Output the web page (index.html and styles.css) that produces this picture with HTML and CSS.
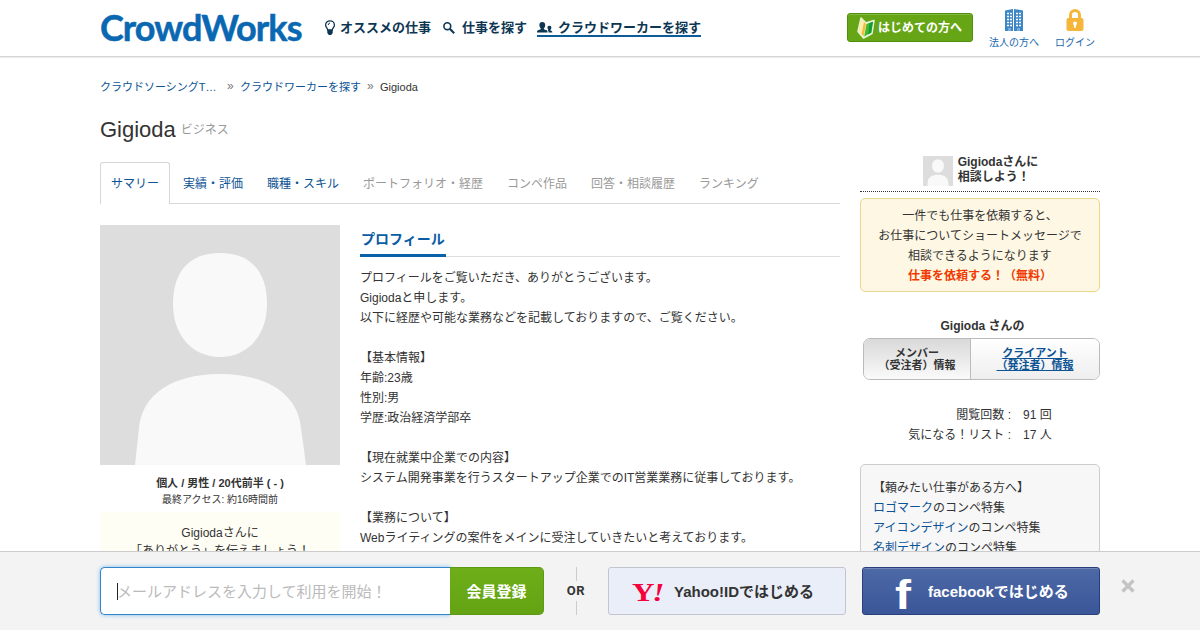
FILE: index.html
```html
<!DOCTYPE html>
<html lang="ja">

<head>
    <meta charset="utf-8">
    <title>Gigioda | CrowdWorks</title>
    <link rel="stylesheet" href="styles.css">
</head>

<body>
    <header class="header">
        <div class="header_inner">
            <a class="logo" href="#">CrowdWorks</a>
            <nav class="global_nav">
                <a class="nav_item" href="#">
                    <svg class="icon_bulb" width="12" height="16" viewBox="0 0 12 16">
                        <path d="M3.7 10C3.7 8 1.6 7.5 1.6 4.9a4.4 4.1 0 0 1 8.8 0C10.4 7.5 8.3 8 8.3 10z" fill="none" stroke="#0d3653" stroke-width="1.3" />
                        <path d="M3.3 10h5.4v3L7.2 15H4.8L3.3 13z" fill="#0d3653" />
                        <path d="M4.2 5q.2-1.8 1.8-2" fill="none" stroke="#0d3653" />
                    </svg>オススメの仕事</a>
                <a class="nav_item" href="#">
                    <svg class="icon_search" width="12" height="12" viewBox="0 0 12 12" fill="none" stroke="#0d3653">
                        <circle cx="4.3" cy="4.2" r="3.4" stroke-width="1.6" />
                        <path d="M6.8 6.8l4.4 4.4" stroke-width="2.1" />
                    </svg>仕事を探す</a>
                <a class="nav_item active" href="#">
                    <svg class="icon_users" width="16" height="11" viewBox="0 0 16 11" fill="#0d3653">
                        <path d="M5.3 0C7.4 0 8.4 1.3 8.2 3.2 8 5 7.4 5.8 6.9 6.3v1l2.6 1c.9.4 1.1 1 1.1 2.2H0c0-1.2.2-1.8 1.1-2.2l2.6-1v-1C3.2 5.8 2.6 5 2.4 3.2 2.2 1.3 3.2 0 5.3 0z" />
                        <path d="M12.4 3.8c1.5 0 2.1.9 1.9 2.2-.1 1-.5 1.5-.9 1.9v.7c1.3.4 2 .7 2 1.9h-3.7c0-1.3-.5-2-1.2-2.3.6-.2.9-.3.9-.5-.4-.4-.8-.8-.9-1.7-.1-1.3.4-2.2 1.9-2.2z" />
                    </svg>クラウドワーカーを探す</a>
            </nav>
            <div class="header_right">
                <a class="beginner_button" href="#">
                    <svg width="18" height="22" viewBox="0 0 18 22">
                        <path d="M4 1l5 5 8-2.5-2 13L6.5 21 1 14.5z" fill="#e9f5da" stroke="#e9f5da" stroke-width="1.5" stroke-linejoin="round" />
                        <path d="M4.3 2L9 7 6.7 19.5 2 14z" fill="#f5bd3c" />
                        <path d="M4.3 2L7 5 4.5 17 2 14z" fill="#fff0ae" />
                        <path d="M9.5 7l6.5-2.3-1.8 11-7 3.8z" fill="#45b82d" />
                        <path d="M12.5 6L16 4.7l-1.8 11-3 1.6z" fill="#159b35" />
                    </svg>はじめての方へ</a>
                <a class="header_link" href="#">
                    <svg width="18" height="22" viewBox="0 0 18 22">
                        <path d="M0 1.5L8 0v22H0zM9 0l9 1.5V22H9z" fill="#3d87c7" />
                        <path d="M2 4.5h5M2 7.5h5M2 10.5h5M2 13.5h5M2 16.5h5M11 4.5h5M11 7.5h5M11 10.5h5M11 13.5h5M11 16.5h5" stroke="#fff" stroke-width="1.6" />
                        <path d="M4.5 3v15M13.5 3v15" stroke="#3d87c7" />
                        <path d="M3 19h3v3H3zM12 19h3v3h-3z" fill="#76addb" />
                    </svg>
                    法人の方へ</a>
                <a class="header_link" href="#">
                    <svg width="18" height="22" viewBox="0 0 18 22">
                        <path d="M4.5 10V6a4.5 4.5 0 0 1 9 0v4" fill="none" stroke="#f5b63a" stroke-width="3" />
                        <rect x="0.5" y="9" width="17" height="13" rx="2" fill="#f5b63a" />
                        <path d="M9 12.5a2 2 0 0 1 1.2 3.6L9.6 19H8.4l-.6-2.9A2 2 0 0 1 9 12.5z" fill="#fff" />
                    </svg>
                    ログイン</a>
            </div>
        </div>
    </header>

    <div class="container">
        <div class="breadcrumbs">
            <a href="#">クラウドソーシングT…</a><i>»</i><a href="#">クラウドワーカーを探す</a><i>»</i><span>Gigioda</span>
        </div>

        <div class="columns">
            <main class="main">
                <div class="user_title">
                    <h1>Gigioda</h1>
                    <span>ビジネス</span>
                </div>

                <ul class="tabs">
                    <li class="current">サマリー</li>
                    <li>実績・評価</li>
                    <li>職種・スキル</li>
                    <li class="disabled">ポートフォリオ・経歴</li>
                    <li class="disabled">コンペ作品</li>
                    <li class="disabled">回答・相談履歴</li>
                    <li class="disabled">ランキング</li>
                </ul>

                <div class="summary">
                    <div class="user_info">
                        <svg class="avatar" viewBox="0 0 240 240">
                            <rect width="240" height="240" fill="#ddd" />
                            <path d="M120 28C152 28 167 48 167 79C167 111 147 132 120 132S73 111 73 79C73 48 88 28 120 28z" fill="#f9f9f9" />
                            <path d="M35 240L39 203C42 169 73 149 120 149S198 169 201 203L206 240z" fill="#f9f9f9" />
                        </svg>
                        <p class="attributes">個人 / 男性 / 20代前半 ( - )</p>
                        <p class="last_access">最終アクセス: 約16時間前</p>
                        <div class="thanks">Gigiodaさんに<br>「ありがとう」を伝えましょう！</div>
                    </div>

                    <section class="profile">
                        <div class="section_title">
                            <h2>プロフィール</h2>
                        </div>
                        <p>プロフィールをご覧いただき、ありがとうございます。<br>
                            Gigiodaと申します。<br>
                            以下に経歴や可能な業務などを記載しておりますので、ご覧ください。</p>
                        <p>【基本情報】<br>
                            年齢:23歳<br>
                            性別:男<br>
                            学歴:政治経済学部卒</p>
                        <p>【現在就業中企業での内容】<br>
                            システム開発事業を行うスタートアップ企業でのIT営業業務に従事しております。</p>
                        <p>【業務について】<br>
                            Webライティングの案件をメインに受注していきたいと考えております。</p>
                    </section>
                </div>
            </main>

            <aside class="side">
                <div class="consult">
                    <svg width="30" height="30" viewBox="0 0 240 240">
                        <rect width="240" height="240" fill="#ddd" />
                        <path d="M120 28C152 28 167 48 167 79C167 111 147 132 120 132S73 111 73 79C73 48 88 28 120 28z" fill="#f9f9f9" />
                        <path d="M35 240L39 203C42 169 73 149 120 149S198 169 201 203L206 240z" fill="#f9f9f9" />
                    </svg>
                    <div>Gigiodaさんに<br>相談しよう！</div>
                </div>
                <div class="notice">
                    一件でも仕事を依頼すると、<br>
                    お仕事についてショートメッセージで<br>
                    相談できるようになります<br>
                    <strong>仕事を依頼する！（無料）</strong>
                </div>

                <div class="switch_title">Gigioda さんの</div>
                <div class="switch">
                    <div class="switch_member">メンバー<br>（受注者）情報</div>
                    <a class="switch_client" href="#">クライアント<br>（発注者）情報</a>
                </div>

                <dl class="counts">
                    <dt>閲覧回数 :</dt>
                    <dd>91 回</dd>
                    <dt>気になる！リスト :</dt>
                    <dd>17 人</dd>
                </dl>

                <div class="features">
                    【頼みたい仕事がある方へ】<br>
                    <a href="#">ロゴマーク</a>のコンペ特集<br>
                    <a href="#">アイコンデザイン</a>のコンペ特集<br>
                    <a href="#">名刺デザイン</a>のコンペ特集
                </div>
            </aside>
        </div>
    </div>

    <div class="register_bar">
        <div class="register_inner">
            <div class="email_field"><span class="caret"></span>メールアドレスを入力して利用を開始！</div>
            <a class="register_button" href="#">会員登録</a>
            <div class="or">OR</div>
            <a class="yahoo_button" href="#"><span class="yahoo_mark">Y<i>!</i></span>Yahoo!IDではじめる</a>
            <a class="facebook_button" href="#"><span class="facebook_mark">f</span>facebookではじめる</a>
            <svg class="close" width="14" height="14" viewBox="0 0 14 14">
                <path d="M1.5 1.5l11 11M12.5 1.5l-11 11" stroke="#c3c3c3" stroke-width="3.2" />
            </svg>
        </div>
    </div>
</body>

</html>
```
FILE: styles.css
```css
* {
    box-sizing: border-box;
}

body {
    margin: 0;
    height: 630px;
    overflow: hidden;
    background: #fff;
    color: #333;
    font-family: "Liberation Sans", "Noto Sans CJK JP", sans-serif;
    font-size: 12px;
    line-height: 20px;
}

h1,
h2,
p,
ul,
dl,
dd {
    margin: 0;
    padding: 0;
}

a {
    color: #0b5394;
    text-decoration: none;
}

svg {
    display: block;
    flex-shrink: 0;
}

/* header */
.header {
    height: 57px;
    border-bottom: 1px solid #d5d5d5;
    box-shadow: 0 1px 1px #eee;
}

.header_inner {
    display: flex;
    width: 1000px;
    margin: 0 auto;
}

.logo {
    width: 224px;
    padding-top: 5px;
    color: #0a67b2;
    font-family: Lato, sans-serif;
    font-size: 36px;
    font-weight: 700;
    line-height: 44px;
    letter-spacing: -0.9px;
    white-space: nowrap;
    -webkit-text-stroke: 0.5px #0a67b2;
}

.global_nav {
    display: flex;
    align-items: flex-start;
    gap: 10px;
    padding-top: 18px;
}

.nav_item {
    display: flex;
    align-items: center;
    height: 19px;
    color: #0d3653;
    font-size: 13px;
    font-weight: bold;
    white-space: nowrap;
}

.nav_item.active {
    box-shadow: inset 0 -2px 0 #0b5c99;
}

.icon_bulb {
    margin-right: 4px;
}

.icon_search {
    margin: 0 7px 0 2px;
}

.icon_users {
    margin-right: 5px;
}

.header_right {
    display: flex;
    align-items: flex-start;
    margin-left: auto;
}

.beginner_button {
    display: flex;
    align-items: center;
    gap: 3px;
    width: 126px;
    height: 29px;
    margin: 13px 16px 0 0;
    padding-left: 9px;
    border: 1px solid #4f9011;
    border-radius: 3px;
    background: #66a616;
    box-shadow: inset 0 1px 0 #83b83f;
    color: #fff;
    font-weight: bold;
}

.header_link {
    display: flex;
    flex-direction: column;
    align-items: center;
    margin: 9px 0 0;
    color: #1b69ae;
    font-size: 10px;
    line-height: 24px;
}

.header_link + .header_link {
    margin: 9px 5px 0 16px;
}

/* contents */
.container {
    width: 1000px;
    margin: 0 auto;
}

.breadcrumbs {
    display: flex;
    padding-top: 20px;
    font-size: 11px;
}

.breadcrumbs i {
    width: 19px;
    padding-left: 6px;
    color: #777;
    font-style: normal;
    font-size: 12px;
    line-height: 18px;
}

.breadcrumbs a:first-child {
    width: 121px;
}

.columns {
    display: flex;
    justify-content: space-between;
}

.main {
    width: 740px;
    padding-top: 18px;
}

.user_title {
    display: flex;
    align-items: center;
    gap: 5px;
    height: 30px;
    color: #999;
}

.user_title h1 {
    color: #333;
    font-size: 22px;
    font-weight: normal;
}

.tabs {
    display: flex;
    height: 42px;
    margin-top: 17px;
    border-bottom: 1px solid #d7d7d7;
    list-style: none;
    color: #0b5394;
    line-height: 44px;
}

.tabs li {
    margin-right: 24px;
}

.tabs .current {
    width: 70px;
    height: 42px;
    margin-right: 13px;
    padding-left: 10px;
    border: 1px solid #d7d7d7;
    border-bottom: 0;
    border-radius: 3px 3px 0 0;
    background: #fff;
    line-height: 42px;
}

.tabs .disabled {
    color: #999;
}

.summary {
    display: flex;
    gap: 20px;
    padding-top: 21px;
}

.user_info {
    width: 240px;
    text-align: center;
}

.avatar {
    width: 240px;
    height: 240px;
}

.attributes {
    padding-top: 9px;
    font-size: 11px;
    font-weight: bold;
    line-height: 18px;
}

.last_access {
    font-size: 10px;
    line-height: 16px;
}

.thanks {
    height: 80px;
    margin-top: 4px;
    padding-top: 12px;
    background: #fffef5;
    line-height: 18px;
}

.profile {
    width: 480px;
}

.section_title {
    display: flex;
    height: 32px;
    margin-bottom: 11px;
    border-bottom: 1px solid #ddd;
}

.section_title h2 {
    height: 32px;
    padding: 4px 1px 0;
    border-bottom: 3px solid #0a62aa;
    color: #0a5ca3;
    font-size: 14px;
}

.profile p {
    margin-bottom: 20px;
    white-space: nowrap;
}

/* side */
.side {
    width: 240px;
    padding-top: 57px;
}

.consult {
    display: flex;
    justify-content: center;
    gap: 5px;
    height: 38px;
    padding: 2px 0 0 1px;
    border-bottom: 1px dotted #333;
    font-weight: bold;
    line-height: 15px;
}

.consult div {
    margin-top: -1px;
}

.notice {
    height: 94px;
    margin-top: 6px;
    padding-top: 7px;
    border: 1px solid #ead98c;
    border-radius: 5px;
    background: #fdf7e3;
    text-align: center;
}

.notice strong {
    color: #f03a00;
}

.switch_title {
    margin-top: 24px;
    padding-left: 5px;
    font-weight: bold;
    text-align: center;
}

.switch {
    display: flex;
    width: 237px;
    height: 42px;
    margin: 2px 0 0 3px;
    border: 1px solid #bbb;
    border-radius: 7px;
    overflow: hidden;
    font-size: 11px;
    font-weight: bold;
    line-height: 12px;
    text-align: center;
}

.switch_member {
    width: 107px;
    padding-top: 8px;
    border-right: 1px solid #bbb;
    background: linear-gradient(#d9d9d9, #fafafa);
}

.switch_client {
    flex: 1;
    padding-top: 8px;
    background: linear-gradient(#fff, #eee);
    text-decoration: underline;
}

.counts {
    display: grid;
    grid-template-columns: 151px 77px;
    column-gap: 12px;
    margin-top: 25px;
}

.counts dt {
    text-align: right;
}

.features {
    height: 150px;
    margin-top: 19px;
    padding: 13px 12px;
    border: 1px solid #ccc;
    border-radius: 5px;
    background: #f7f7f7;
}

/* register bar */
.register_bar {
    position: fixed;
    right: 0;
    bottom: 0;
    left: 0;
    height: 79px;
    border-top: 1px solid #ccc;
    background: #f3f3f3;
}

.register_inner {
    display: flex;
    width: 1036px;
    margin-left: 100px;
    padding-top: 15px;
    font-size: 15px;
    font-weight: bold;
}

.email_field {
    display: flex;
    align-items: center;
    width: 350px;
    height: 48px;
    padding: 2px 0 0 16px;
    border: 1px solid #3186cb;
    border-right: 0;
    border-radius: 5px 0 0 5px;
    background: #fff;
    box-shadow: 0 0 4px #7dbcf0;
    color: #bbb;
    font-weight: normal;
}

.caret {
    width: 1px;
    height: 17px;
    margin: -2px -1px 0 0;
    background: #222;
}

.register_button {
    z-index: 1;
    width: 94px;
    height: 48px;
    border: 1px solid #5c9a13;
    border-left: 0;
    border-radius: 0 5px 5px 0;
    background: linear-gradient(#6dae19, #64a313);
    color: #fff;
    line-height: 48px;
    text-align: center;
}

.or {
    display: flex;
    flex-direction: column;
    align-items: center;
    justify-content: space-between;
    width: 64px;
    height: 48px;
    font-family: Roboto, sans-serif;
    font-size: 13px;
    letter-spacing: 0.5px;
}

.or::before,
.or::after {
    content: "";
    width: 1px;
    height: 14px;
    background: #ccc;
}

.yahoo_button,
.facebook_button {
    display: flex;
    align-items: center;
    width: 238px;
    height: 48px;
    padding-top: 2px;
    border: 1px solid #c1c5ce;
    border-radius: 3px;
    background: #e9eef8;
    color: #333;
    white-space: nowrap;
}

.yahoo_mark {
    width: 42px;
    margin: 2px 0 0 23px;
    color: #f5003c;
    font-family: "Liberation Serif", serif;
    font-size: 26px;
    transform: scaleX(1.2);
    transform-origin: left;
}

.yahoo_mark i {
    margin-left: -2px;
}

.facebook_button {
    margin-left: 16px;
    border-color: #293e7c;
    background: linear-gradient(#4d69a6, #3b5698);
    box-shadow: inset 0 1px 0 #7187b6;
    color: #fff;
}

.facebook_mark {
    width: 33px;
    margin: 5px 0 0 32px;
    font-family: "Liberation Sans", sans-serif;
    font-size: 40px;
    transform: scaleX(1.2);
    transform-origin: left;
}

.close {
    margin: 12px 0 0 21px;
}
```
